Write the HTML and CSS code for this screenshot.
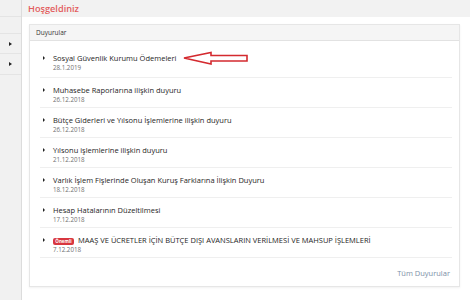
FILE: index.html
```html
<!DOCTYPE html>
<html>

<head>
  <title>Hoşgeldiniz</title>
  <link rel="stylesheet" href="styles.css">
</head>

<body>
  <div class="layout">
    <div class="sidebar">
      <div class="side-row r1"></div>
      <div class="side-row r2"></div>
      <div class="side-row r3"><span class="caret"></span></div>
      <div class="side-row r4"><span class="caret"></span></div>
    </div>

    <div class="main">
      <div class="page-head">
        <h1>Hoşgeldiniz</h1>
      </div>

      <div class="panel">
        <div class="panel-heading">Duyurular</div>

        <ul class="news">
          <li class="news-item">
            <span class="bullet"></span>
            <div class="news-body">
              <div class="news-title">Sosyal Güvenlik Kurumu Ödemeleri</div>
              <div class="news-date">28.1.2019</div>
            </div>
            <!-- red annotation arrow drawn over the list -->
            <svg class="mark-arrow" width="70" height="18" viewBox="0 0 70 18">
              <path d="M2 8 L29 2.5 L29 5.5 L65 5.5 L65 11 L29 11 L29 14 Z" fill="#fff" stroke="#d42a2f" stroke-width="1.6" stroke-linejoin="miter"/>
            </svg>
          </li>
          <li class="news-item">
            <span class="bullet"></span>
            <div class="news-body">
              <div class="news-title">Muhasebe Raporlarına ilişkin duyuru</div>
              <div class="news-date">26.12.2018</div>
            </div>
          </li>
          <li class="news-item">
            <span class="bullet"></span>
            <div class="news-body">
              <div class="news-title">Bütçe Giderleri ve Yılsonu İşlemlerine ilişkin duyuru</div>
              <div class="news-date">26.12.2018</div>
            </div>
          </li>
          <li class="news-item">
            <span class="bullet"></span>
            <div class="news-body">
              <div class="news-title">Yılsonu işlemlerine ilişkin duyuru</div>
              <div class="news-date">21.12.2018</div>
            </div>
          </li>
          <li class="news-item">
            <span class="bullet"></span>
            <div class="news-body">
              <div class="news-title">Varlık İşlem Fişlerinde Oluşan Kuruş Farklarına İlişkin Duyuru</div>
              <div class="news-date">18.12.2018</div>
            </div>
          </li>
          <li class="news-item">
            <span class="bullet"></span>
            <div class="news-body">
              <div class="news-title">Hesap Hatalarının Düzeltilmesi</div>
              <div class="news-date">17.12.2018</div>
            </div>
          </li>
          <li class="news-item">
            <span class="bullet"></span>
            <div class="news-body">
              <div class="news-title"><span class="badge">Önemli</span>MAAŞ VE ÜCRETLER İÇİN BÜTÇE DIŞI AVANSLARIN VERİLMESİ VE MAHSUP İŞLEMLERİ</div>
              <div class="news-date">7.12.2018</div>
            </div>
          </li>
        </ul>

        <div class="panel-footer">
          <a href="#" class="all-link">Tüm Duyurular</a>
        </div>
      </div>
    </div>
  </div>
</body>

</html>
```

FILE: styles.css
```css
body {
  margin: 0;
  font-family: "Open Sans", "Noto Sans", sans-serif;
  color: #333;
  background: #fff;
}

.layout {
  display: flex;
  min-height: 300px;
}

/* left menu strip */
.sidebar {
  width: 21px;
  background: #f1f1f1;
  border-right: 1px solid #dcdcdc;
}

.side-row {
  display: flex;
  align-items: center;
  justify-content: center;
  border-bottom: 1px solid #e4e4e4;
}

.r1 { height: 16px; }
.r2 { height: 16px; }
.r3 { height: 19px; }
.r4 { height: 20px; }

.caret {
  width: 0;
  height: 0;
  border-top: 2.5px solid transparent;
  border-bottom: 2.5px solid transparent;
  border-left: 3px solid #222;
}

.main {
  flex: 1;
}

.page-head {
  height: 17px;
  background: #f2f2f2;
  display: flex;
  align-items: center;
  padding-left: 6px;
}

.page-head h1 {
  margin: 0;
  font-size: 9.2px;
  font-weight: 600;
  color: #e35d5d;
}

.panel {
  margin: 7px 10px 0 7px;
  border: 1px solid #e6e6e6;
  box-shadow: 0 1px 2px rgba(0, 0, 0, 0.06);
}

.panel-heading {
  height: 15px;
  line-height: 15px;
  padding-left: 6px;
  font-size: 6.5px;
  background: #f5f5f5;
  border-bottom: 1px solid #e2e2e2;
}

.news {
  list-style: none;
  margin: 0 7px 0 10px;
  padding: 5px 0 0 0;
}

.news-item {
  position: relative;
  display: flex;
  padding: 7px 0 3px 0;
  border-bottom: 1px solid #efefef;
}

.news-item:first-child {
  padding-bottom: 5px;
}

.bullet {
  width: 0;
  height: 0;
  margin: 3px 8px 0 3px;
  border-top: 2px solid transparent;
  border-bottom: 2px solid transparent;
  border-left: 2.5px solid #222;
}

.news-title {
  font-size: 7.5px;
  line-height: 10px;
  color: #262626;
}

.news-date {
  font-size: 6.2px;
  line-height: 9px;
  color: #6f6f6f;
}

.badge {
  display: inline-block;
  width: 21px;
  height: 7px;
  line-height: 7px;
  margin-right: 4px;
  border-radius: 2px;
  background: #d8373f;
  color: #fff;
  font-size: 4.5px;
  font-weight: 700;
  text-align: center;
  vertical-align: 0;
}

.mark-arrow {
  position: absolute;
  left: 142px;
  top: 4px;
}

.panel-footer {
  padding: 7px 9px 8px 0;
  text-align: right;
  line-height: 10px;
}

.all-link {
  font-size: 7.5px;
  color: #7d90a7;
  text-decoration: none;
}
```
